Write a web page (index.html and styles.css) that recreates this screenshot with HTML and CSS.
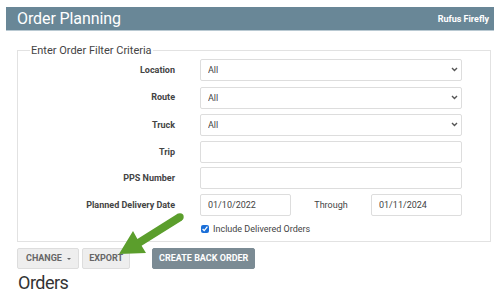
FILE: index.html
```html
<!DOCTYPE html>
<html>
    <head>
        <title>Order Planning</title>
        <link rel="stylesheet" href="styles.css">
    </head>
    <body>
        <div class="page">
            <div class="topbar">
                <span class="topbar-title">Order Planning</span>
                <span class="topbar-user">Rufus Firefly</span>
            </div>

            <fieldset class="filter">
                <legend>Enter Order Filter Criteria</legend>
                <div class="filter-grid">
                    <label class="lbl">Location</label>
                    <div class="select-wrap">
                        <select class="ctl"><option>All</option></select>
                        <svg class="chev" width="7" height="5" viewBox="0 0 7 5"><path d="M1 1 L3.5 3.5 L6 1" fill="none" stroke="#555" stroke-width="1.4"/></svg>
                    </div>

                    <label class="lbl">Route</label>
                    <div class="select-wrap">
                        <select class="ctl"><option>All</option></select>
                        <svg class="chev" width="7" height="5" viewBox="0 0 7 5"><path d="M1 1 L3.5 3.5 L6 1" fill="none" stroke="#555" stroke-width="1.4"/></svg>
                    </div>

                    <label class="lbl">Truck</label>
                    <div class="select-wrap">
                        <select class="ctl"><option>All</option></select>
                        <svg class="chev" width="7" height="5" viewBox="0 0 7 5"><path d="M1 1 L3.5 3.5 L6 1" fill="none" stroke="#555" stroke-width="1.4"/></svg>
                    </div>

                    <label class="lbl">Trip</label>
                    <input type="text" class="ctl">

                    <label class="lbl">PPS Number</label>
                    <input type="text" class="ctl">

                    <label class="lbl">Planned Delivery Date</label>
                    <div class="date-row">
                        <input type="text" class="ctl date" value="01/10/2022">
                        <span class="through">Through</span>
                        <input type="text" class="ctl date" value="01/11/2024">
                    </div>

                    <span></span>
                    <label class="check"><input type="checkbox" checked> Include Delivered Orders</label>
                </div>
            </fieldset>

            <div class="actions">
                <button class="btn btn-change">Change <span class="caret"></span></button>
                <button class="btn">Export</button>
                <button class="btn btn-dark">Create Back Order</button>
            </div>

            <h2 class="orders">Orders</h2>
        </div>

        <svg class="arrow" width="502" height="298" viewBox="0 0 502 298">
            <polygon points="178,213.4 137.4,239 133,231 119,254 146,253 141.6,245.8 182,220.6" fill="#5b9e2c"/>
            <circle cx="180" cy="217" r="3.7" fill="#5b9e2c"/>
        </svg>
    </body>
</html>
```

FILE: styles.css
```css
body{
    margin: 0;
    background: #fff;
    font-family: Roboto, "Liberation Sans", sans-serif;
    color: #333;
}
.page{
    padding: 7px 8px 0 6px;
}
.topbar{
    display: flex;
    justify-content: space-between;
    align-items: center;
    height: 23px;
    background-color: #698797;
    border-bottom: 1px solid #b9c9d2;
    padding: 0 5px 0 11px;
}
.topbar-title{
    color: #fff;
    font-size: 16px;
    letter-spacing: -0.1px;
}
.topbar-user{
    color: #fff;
    font-size: 9px;
    font-weight: bold;
}
.filter{
    margin: 13px 3px 0 11px;
    padding: 1px 0 5px 12px;
    border: 1px solid #e2e2e2;
    min-width: 0;
}
.filter legend{
    font-size: 11px;
    color: #444;
    padding: 0 1px;
}
.filter-grid{
    display: grid;
    grid-template-columns: 145px 262px;
    column-gap: 25px;
    row-gap: 4.6px;
    align-items: center;
}
.lbl{
    text-align: right;
    font-size: 9px;
    font-weight: bold;
    color: #444;
}
.ctl{
    box-sizing: border-box;
    width: 100%;
    height: 22px;
    border: 1px solid #ddd;
    border-radius: 2px;
    background: #fff;
    font-family: Roboto, "Liberation Sans", sans-serif;
    font-size: 9px;
    color: #444;
    padding: 0 7px;
    margin: 0;
    outline: none;
}
select.ctl{
    appearance: none;
    -webkit-appearance: none;
}
.select-wrap{
    position: relative;
}
.chev{
    position: absolute;
    right: 4px;
    top: 9px;
}
.date-row{
    display: flex;
    align-items: center;
    justify-content: space-between;
}
.date{
    width: 91px;
}
.through{
    font-size: 9px;
    color: #444;
}
.check{
    display: flex;
    align-items: center;
    font-size: 9px;
    color: #444;
    height: 14px;
    margin-top: 1px;
}
.check input{
    width: 8px;
    height: 8px;
    margin: 0 4px 0 1px;
    accent-color: #1b6fd8;
}
.actions{
    display: flex;
    gap: 3px;
    margin: 6px 0 0 11px;
}
.btn{
    height: 21px;
    border: 1px solid #ddd;
    border-radius: 2px;
    background: #eee;
    color: #666;
    font-family: Roboto, "Liberation Sans", sans-serif;
    font-size: 9px;
    font-weight: bold;
    text-transform: uppercase;
    padding: 0 6px;
}
.btn-change{
    padding: 0 7px 0 8px;
}
.caret{
    display: inline-block;
    width: 0;
    height: 0;
    border-left: 2.5px solid transparent;
    border-right: 2.5px solid transparent;
    border-top: 2.5px solid #666;
    vertical-align: middle;
    margin-left: 3px;
}
.btn-dark{
    margin-left: 19px;
    background: #7b8b94;
    border-color: #7b8b94;
    color: #fff;
}
.orders{
    margin: 3px 0 0 12px;
    font-size: 18px;
    letter-spacing: -0.5px;
    font-weight: normal;
    color: #333;
}
.arrow{
    position: absolute;
    left: 0;
    top: 0;
    pointer-events: none;
}
```
